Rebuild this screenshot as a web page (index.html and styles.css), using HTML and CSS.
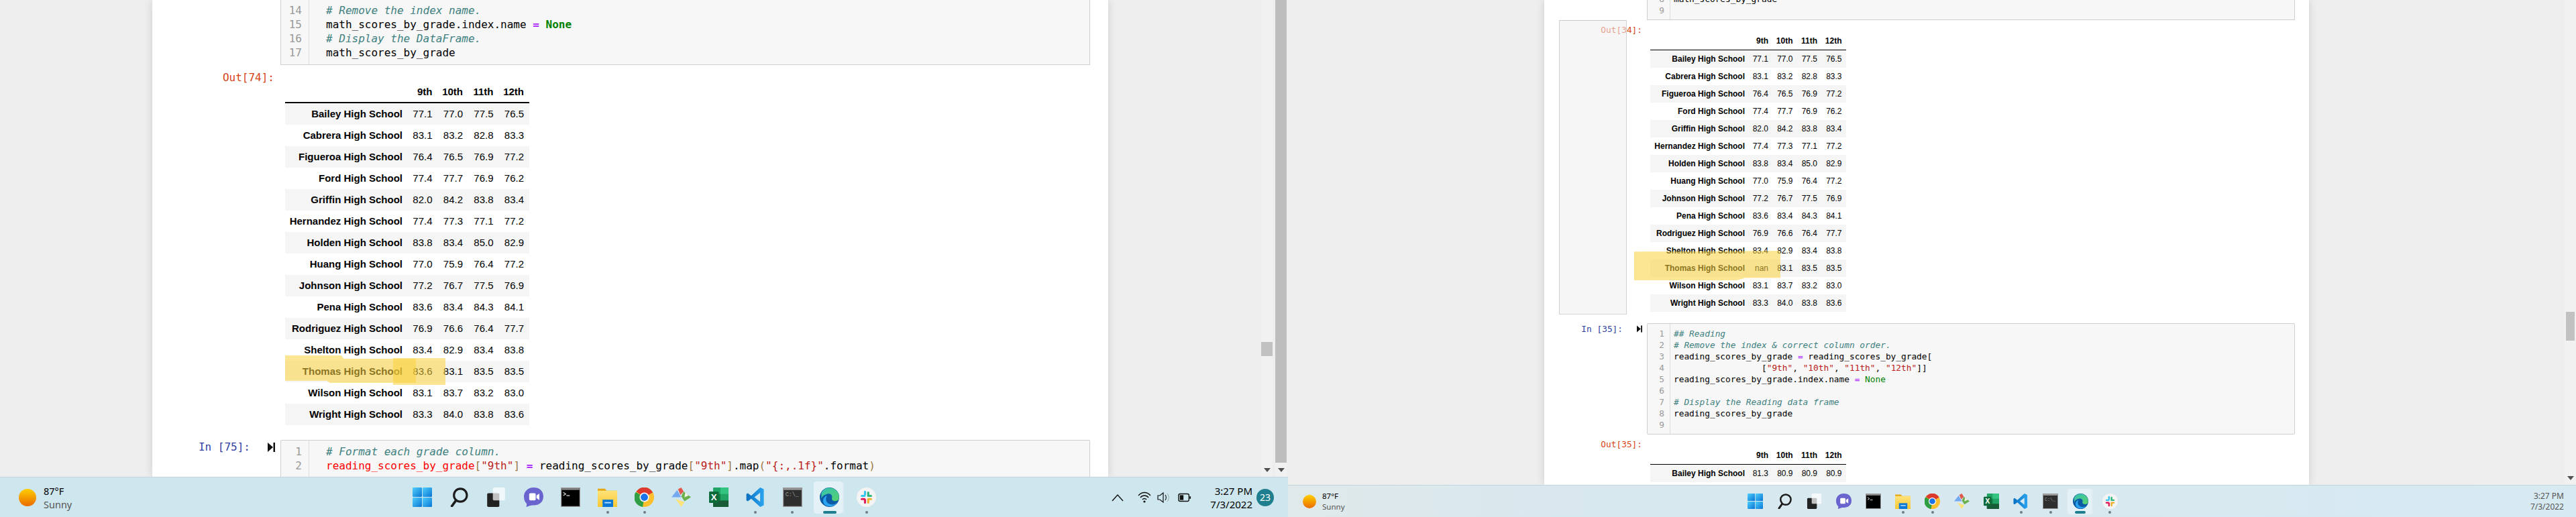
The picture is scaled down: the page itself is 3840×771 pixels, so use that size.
FILE: index.html
```html
<!DOCTYPE html>
<html lang="en">
<head>
    <meta charset="UTF-8">
    <title>Jupyter notebooks on two screens</title>
    <link rel="stylesheet" href="styles.css">
</head>
<body>
    <svg class="defs" width="0" height="0">
        <defs>
            <linearGradient id="g-win" x1="0" y1="0" x2="1" y2="1"><stop offset="0" stop-color="#4fd0fb"/><stop offset="1" stop-color="#0a74d6"/></linearGradient>
            <linearGradient id="g-folder" x1="0" y1="0" x2="0" y2="1"><stop offset="0" stop-color="#ffe27a"/><stop offset="1" stop-color="#fbc833"/></linearGradient>
            <linearGradient id="g-edge" x1="0" y1="0" x2="1" y2="1"><stop offset="0" stop-color="#35c1b4"/><stop offset="1" stop-color="#58d26a"/></linearGradient>
            <linearGradient id="g-vs" x1="0" y1="0" x2="1" y2="0"><stop offset="0" stop-color="#0a6fc0"/><stop offset="1" stop-color="#2aa4f0"/></linearGradient>

            <symbol id="i-win" viewBox="0 0 24 24">
                <rect x="0" y="0" width="11.6" height="11.6" rx="1" fill="url(#g-win)"/>
                <rect x="12.4" y="0" width="11.6" height="11.6" rx="1" fill="url(#g-win)"/>
                <rect x="0" y="12.4" width="11.6" height="11.6" rx="1" fill="url(#g-win)"/>
                <rect x="12.4" y="12.4" width="11.6" height="11.6" rx="1" fill="url(#g-win)"/>
            </symbol>
            <symbol id="i-search" viewBox="0 0 24 24">
                <circle cx="13.5" cy="9.5" r="8" fill="none" stroke="#1c1c1c" stroke-width="2.6"/>
                <path d="M8 16 L3 23" stroke="#1c1c1c" stroke-width="3" stroke-linecap="round"/>
            </symbol>
            <symbol id="i-tasks" viewBox="0 0 24 24">
                <rect x="1" y="7" width="15" height="17" rx="1.5" fill="#222"/>
                <rect x="8" y="0" width="15" height="16" rx="1.5" fill="#fff" fill-opacity=".72"/>
            </symbol>
            <symbol id="i-chat" viewBox="0 0 24 24">
                <path d="M12 0 C20 0 24 5 24 11 C24 18 19 22 12 22 C10 22 8 22 6 23 L3 24 L3.500 20 C1 18 0 15 0 11 C0 5 5 0 12 0 Z" fill="#6a64cf"/>
                <rect x="6.500" y="7" width="8" height="9" rx="1.500" fill="#fff"/>
                <path d="M15.500 10 L19 7.500 V15.500 L15.500 13 Z" fill="#fff"/>
            </symbol>
            <symbol id="i-term" viewBox="0 0 24 24">
                <rect x="0.500" y="0.500" width="23" height="23" fill="#000" stroke="#9a9a9a"/>
                <rect x="1" y="1" width="22" height="2" fill="#8c8c8c"/>
                <path d="M3 6 L6 8 L3 10 M7 10 H11" stroke="#ddd" stroke-width="1" fill="none"/>
            </symbol>
            <symbol id="i-folder" viewBox="0 0 24 24">
                <path d="M0 1.500 H9 L11 4 H24 V24 H0 Z" fill="#e6a817"/>
                <rect x="0" y="4" width="24" height="20" fill="url(#g-folder)"/>
                <rect x="6" y="15" width="13" height="9" fill="#0a78d4"/>
                <rect x="8.500" y="18" width="8" height="1.500" fill="#bfe3ff"/>
            </symbol>
            <symbol id="i-chrome" viewBox="0 0 24 24">
                <circle cx="12" cy="12" r="12" fill="#fbc02d"/>
                <path d="M12 12 L2 5 A12 12 0 0 1 22.500 6 Z" fill="#dc3a2c"/>
                <path d="M12 12 L1.500 5.500 A12 12 0 0 0 10 24 Z" fill="#2f9e44"/>
                <circle cx="12" cy="12" r="5.800" fill="#fff"/>
                <circle cx="12" cy="12" r="4.500" fill="#1a73e8"/>
            </symbol>
            <symbol id="i-git" viewBox="0 0 24 24">
                <path d="M12 12 L0 12 L7 3 L12 12 Z" fill="#74a9f2"/>
                <path d="M8 2 L12 0 L15 5 L11 9 Z" fill="#e2574c"/>
                <path d="M15 5 L24 12 L16 17 L12 11 Z" fill="#6cb04d"/>
                <path d="M17 6 L21 10 L16 12 Z" fill="#f0f5ea"/>
                <path d="M5 14 L16 18 L12 24 Z" fill="#fbe27a"/>
            </symbol>
            <symbol id="i-excel" viewBox="0 0 24 24">
                <rect x="5" y="0" width="19" height="24" rx="1" fill="#21a366"/>
                <rect x="14" y="0" width="10" height="8" fill="#33c481"/>
                <rect x="5" y="8" width="9" height="8" fill="#107c41"/>
                <rect x="5" y="16" width="19" height="8" fill="#185c37"/>
                <rect x="0" y="5" width="12" height="14" rx="1" fill="#0f6a3a"/>
                <text x="6" y="15.500" class="excel-x">X</text>
            </symbol>
            <symbol id="i-vs" viewBox="0 0 24 24">
                <path d="M17.500 0 L22 2 V22 L17.500 24 L6.500 13.800 L2.300 17 L0.500 16 V8 L2.300 7 L6.500 10.200 Z M17.500 6.500 L10.500 12 L17.500 17.500 Z" fill="url(#g-vs)" fill-rule="evenodd"/>
            </symbol>
            <symbol id="i-cmd" viewBox="0 0 24 24">
                <rect x="0.500" y="0.500" width="23" height="23" fill="#2e2e2e" stroke="#9a9a9a"/>
                <rect x="1" y="1" width="22" height="2" fill="#a0a0a0"/>
                <text x="3" y="11" class="cmd-text">C:\_</text>
            </symbol>
            <symbol id="i-edge" viewBox="0 0 24 24">
                <circle cx="12" cy="12" r="12" fill="#0c59a4"/>
                <path d="M2 7 C5 0 13 -1 18 2 C23 5 25 11 23 15 C20 18 14 17 15 13 C16 9 13 7 9 8 C6 9 3 10 2 14 Z" fill="url(#g-edge)"/>
                <path d="M9 10 C6 14 8 21 15 21 C18 21 20 20 22 18 C19 23 12 25 7 22 C3 19 3 12 9 10 Z" fill="#2aa4f0"/>
            </symbol>
            <symbol id="i-slack" viewBox="0 0 24 24">
                <circle cx="12" cy="12" r="12" fill="#f4f4f4"/>
                <rect x="5" y="9" width="6" height="2.600" rx="1.300" fill="#36c5f0"/>
                <rect x="9" y="4" width="2.600" height="6" rx="1.300" fill="#36c5f0"/>
                <rect x="13" y="5" width="2.600" height="6" rx="1.300" fill="#2eb67d"/>
                <rect x="13" y="9" width="6" height="2.600" rx="1.300" fill="#2eb67d"/>
                <rect x="13" y="13" width="6" height="2.600" rx="1.300" fill="#ecb22e"/>
                <rect x="13" y="14" width="2.600" height="6" rx="1.300" fill="#ecb22e"/>
                <rect x="5" y="13" width="6" height="2.600" rx="1.300" fill="#e01e5a"/>
                <rect x="9" y="14" width="2.600" height="6" rx="1.300" fill="#e01e5a"/>
            </symbol>
            <symbol id="i-run" viewBox="0 0 11 14">
                <path d="M0 0 L8 7 L0 14 Z" fill="#111"/>
                <rect x="8.500" y="0" width="2.500" height="14" fill="#111"/>
            </symbol>
        </defs>
    </svg>

    <div class="screens">
        <!-- left monitor -->
        <section class="screen big">
            <div class="browser">
                <main class="sheet">
                    <div class="cell-row">
                        <div class="prompt"></div>
                        <div class="cell top-cut">
                            <div class="gutter"><div>14</div><div>15</div><div>16</div><div>17</div></div>
                            <div class="code">
                                <div class="ln"><span class="c"># Remove the index name.</span></div>
                                <div class="ln">math_scores_by_grade.index.name <span class="o">=</span> <span class="k">None</span></div>
                                <div class="ln"><span class="c"># Display the DataFrame.</span></div>
                                <div class="ln">math_scores_by_grade</div>
                            </div>
                        </div>
                    </div>

                    <div class="output-row">
                        <div class="prompt out">Out[74]:</div>
                        <table class="df">
                            <thead><tr><th></th><th>9th</th><th>10th</th><th>11th</th><th>12th</th></tr></thead>
                            <tbody>
                                <tr><th>Bailey High School</th><td>77.1</td><td>77.0</td><td>77.5</td><td>76.5</td></tr>
                                <tr><th>Cabrera High School</th><td>83.1</td><td>83.2</td><td>82.8</td><td>83.3</td></tr>
                                <tr><th>Figueroa High School</th><td>76.4</td><td>76.5</td><td>76.9</td><td>77.2</td></tr>
                                <tr><th>Ford High School</th><td>77.4</td><td>77.7</td><td>76.9</td><td>76.2</td></tr>
                                <tr><th>Griffin High School</th><td>82.0</td><td>84.2</td><td>83.8</td><td>83.4</td></tr>
                                <tr><th>Hernandez High School</th><td>77.4</td><td>77.3</td><td>77.1</td><td>77.2</td></tr>
                                <tr><th>Holden High School</th><td>83.8</td><td>83.4</td><td>85.0</td><td>82.9</td></tr>
                                <tr><th>Huang High School</th><td>77.0</td><td>75.9</td><td>76.4</td><td>77.2</td></tr>
                                <tr><th>Johnson High School</th><td>77.2</td><td>76.7</td><td>77.5</td><td>76.9</td></tr>
                                <tr><th>Pena High School</th><td>83.6</td><td>83.4</td><td>84.3</td><td>84.1</td></tr>
                                <tr><th>Rodriguez High School</th><td>76.9</td><td>76.6</td><td>76.4</td><td>77.7</td></tr>
                                <tr><th>Shelton High School</th><td>83.4</td><td>82.9</td><td>83.4</td><td>83.8</td></tr>
                                <tr><th>Thomas High School</th><td>83.6</td><td>83.1</td><td>83.5</td><td>83.5</td></tr>
                                <tr><th>Wilson High School</th><td>83.1</td><td>83.7</td><td>83.2</td><td>83.0</td></tr>
                                <tr><th>Wright High School</th><td>83.3</td><td>84.0</td><td>83.8</td><td>83.6</td></tr>
                            </tbody>
                        </table>
                        <div class="marker mark-a"></div>
                        <div class="marker mark-b"></div>
                    </div>

                    <div class="cell-row next">
                        <div class="prompt in"><span>In [75]:</span><svg class="run"><use href="#i-run"/></svg></div>
                        <div class="cell bottom-cut">
                            <div class="gutter"><div>1</div><div>2</div></div>
                            <div class="code">
                                <div class="ln"><span class="c"># Format each grade column.</span></div>
                                <div class="ln"><span class="err">reading_scores_by_grade</span><span class="b">[</span><span class="s">"9th"</span><span class="b">]</span> <span class="o">=</span> reading_scores_by_grade<span class="b">[</span><span class="s">"9th"</span><span class="b">]</span>.map<span class="b">(</span><span class="s">"{:,.1f}"</span>.format<span class="b">)</span></div>
                            </div>
                        </div>
                    </div>
                </main>
                <div class="filler"></div>
                <div class="scroll track">
                    <div class="thumb"></div>
                    <div class="arrow"></div>
                </div>
                <div class="scroll solid">
                    <div class="bar"></div>
                    <div class="arrow"></div>
                </div>
            </div>

            <footer class="taskbar">
                <div class="weather">
                    <div class="sun"></div>
                    <div class="weather-text"><div>87°F</div><div class="dim">Sunny</div></div>
                </div>
                <div class="apps">
                    <div class="app"><svg class="ico"><use href="#i-win"/></svg></div>
                    <div class="app"><svg class="ico"><use href="#i-search"/></svg></div>
                    <div class="app"><svg class="ico"><use href="#i-tasks"/></svg></div>
                    <div class="app"><svg class="ico"><use href="#i-chat"/></svg></div>
                    <div class="app"><svg class="ico"><use href="#i-term"/></svg></div>
                    <div class="app open"><svg class="ico"><use href="#i-folder"/></svg></div>
                    <div class="app open"><svg class="ico"><use href="#i-chrome"/></svg></div>
                    <div class="app"><svg class="ico"><use href="#i-git"/></svg></div>
                    <div class="app"><svg class="ico"><use href="#i-excel"/></svg></div>
                    <div class="app open"><svg class="ico"><use href="#i-vs"/></svg></div>
                    <div class="app open"><svg class="ico"><use href="#i-cmd"/></svg></div>
                    <div class="app active"><svg class="ico"><use href="#i-edge"/></svg></div>
                    <div class="app open"><svg class="ico"><use href="#i-slack"/></svg></div>
                </div>
                <div class="tray">
                    <svg class="tray-ico chevron" viewBox="0 0 18 18"><path d="M1 14 L9 5 L17 14" fill="none" stroke="#111" stroke-width="1.400"/></svg>
                    <svg class="tray-ico wifi" viewBox="0 0 20 18"><path d="M1 6 C6 0 14 0 19 6 M4 9 C7 5 13 5 16 9 M7 12 C8.500 10 11.500 10 13 12" fill="none" stroke="#111" stroke-width="1.300"/><circle cx="10" cy="15" r="1.600" fill="#111"/></svg>
                    <svg class="tray-ico speaker" viewBox="0 0 20 18"><path d="M1 6 H4 L9 2 V16 L4 12 H1 Z" fill="none" stroke="#111" stroke-width="1.200"/><path d="M12 5 C14 8 14 10 12 13" fill="none" stroke="#111" stroke-width="1.100"/><path d="M15 3 C18 7 18 11 15 15" fill="none" stroke="#9aa" stroke-width="1"/></svg>
                    <svg class="tray-ico battery" viewBox="0 0 22 18"><rect x="1" y="3" width="17" height="12" rx="2.500" fill="none" stroke="#111" stroke-width="1.500"/><rect x="3" y="5" width="6" height="8" fill="#111"/><rect x="19" y="7" width="2" height="4" fill="#111"/></svg>
                    <div class="clock"><div>3:27 PM</div><div>7/3/2022</div></div>
                    <div class="badge">23</div>
                </div>
            </footer>
        </section>

        <!-- right monitor -->
        <section class="screen small">
            <div class="browser">
                <main class="sheet">
                    <div class="cell-row">
                        <div class="prompt"></div>
                        <div class="cell top-cut">
                            <div class="gutter"><div>8</div><div>9</div></div>
                            <div class="code">
                                <div class="ln">math_scores_by_grade</div>
                                <div class="ln"></div>
                            </div>
                        </div>
                    </div>

                    <div class="output-row">
                        <div class="prompt out">Out[34]:</div>
                        <table class="df">
                            <thead><tr><th></th><th>9th</th><th>10th</th><th>11th</th><th>12th</th></tr></thead>
                            <tbody>
                                <tr><th>Bailey High School</th><td>77.1</td><td>77.0</td><td>77.5</td><td>76.5</td></tr>
                                <tr><th>Cabrera High School</th><td>83.1</td><td>83.2</td><td>82.8</td><td>83.3</td></tr>
                                <tr><th>Figueroa High School</th><td>76.4</td><td>76.5</td><td>76.9</td><td>77.2</td></tr>
                                <tr><th>Ford High School</th><td>77.4</td><td>77.7</td><td>76.9</td><td>76.2</td></tr>
                                <tr><th>Griffin High School</th><td>82.0</td><td>84.2</td><td>83.8</td><td>83.4</td></tr>
                                <tr><th>Hernandez High School</th><td>77.4</td><td>77.3</td><td>77.1</td><td>77.2</td></tr>
                                <tr><th>Holden High School</th><td>83.8</td><td>83.4</td><td>85.0</td><td>82.9</td></tr>
                                <tr><th>Huang High School</th><td>77.0</td><td>75.9</td><td>76.4</td><td>77.2</td></tr>
                                <tr><th>Johnson High School</th><td>77.2</td><td>76.7</td><td>77.5</td><td>76.9</td></tr>
                                <tr><th>Pena High School</th><td>83.6</td><td>83.4</td><td>84.3</td><td>84.1</td></tr>
                                <tr><th>Rodriguez High School</th><td>76.9</td><td>76.6</td><td>76.4</td><td>77.7</td></tr>
                                <tr><th>Shelton High School</th><td>83.4</td><td>82.9</td><td>83.4</td><td>83.8</td></tr>
                                <tr><th>Thomas High School</th><td>nan</td><td>83.1</td><td>83.5</td><td>83.5</td></tr>
                                <tr><th>Wilson High School</th><td>83.1</td><td>83.7</td><td>83.2</td><td>83.0</td></tr>
                                <tr><th>Wright High School</th><td>83.3</td><td>84.0</td><td>83.8</td><td>83.6</td></tr>
                            </tbody>
                        </table>
                        <div class="collapser"></div>
                        <div class="marker mark-c"></div>
                    </div>

                    <div class="cell-row next">
                        <div class="prompt in"><span>In [35]:</span><svg class="run"><use href="#i-run"/></svg></div>
                        <div class="cell">
                            <div class="gutter"><div>1</div><div>2</div><div>3</div><div>4</div><div>5</div><div>6</div><div>7</div><div>8</div><div>9</div></div>
                            <div class="code">
                                <div class="ln"><span class="c">## Reading</span></div>
                                <div class="ln"><span class="c"># Remove the index &amp; correct column order.</span></div>
                                <div class="ln">reading_scores_by_grade <span class="o">=</span> reading_scores_by_grade[</div>
                                <div class="ln">                 [<span class="s">"9th"</span>, <span class="s">"10th"</span>, <span class="s">"11th"</span>, <span class="s">"12th"</span>]]</div>
                                <div class="ln">reading_scores_by_grade.index.name <span class="o">=</span> <span class="k">None</span></div>
                                <div class="ln"></div>
                                <div class="ln"><span class="c"># Display the Reading data frame</span></div>
                                <div class="ln">reading_scores_by_grade</div>
                                <div class="ln"></div>
                            </div>
                        </div>
                    </div>

                    <div class="output-row last">
                        <div class="prompt out">Out[35]:</div>
                        <table class="df">
                            <thead><tr><th></th><th>9th</th><th>10th</th><th>11th</th><th>12th</th></tr></thead>
                            <tbody>
                                <tr><th>Bailey High School</th><td>81.3</td><td>80.9</td><td>80.9</td><td>80.9</td></tr>
                            </tbody>
                        </table>
                    </div>
                </main>
                <div class="filler"></div>
                <div class="scroll track">
                    <div class="thumb"></div>
                    <div class="arrow"></div>
                </div>
            </div>

            <footer class="taskbar">
                <div class="weather">
                    <div class="sun"></div>
                    <div class="weather-text"><div>87°F</div><div class="dim">Sunny</div></div>
                </div>
                <div class="apps">
                    <div class="app"><svg class="ico"><use href="#i-win"/></svg></div>
                    <div class="app"><svg class="ico"><use href="#i-search"/></svg></div>
                    <div class="app"><svg class="ico"><use href="#i-tasks"/></svg></div>
                    <div class="app"><svg class="ico"><use href="#i-chat"/></svg></div>
                    <div class="app"><svg class="ico"><use href="#i-term"/></svg></div>
                    <div class="app open"><svg class="ico"><use href="#i-folder"/></svg></div>
                    <div class="app open"><svg class="ico"><use href="#i-chrome"/></svg></div>
                    <div class="app"><svg class="ico"><use href="#i-git"/></svg></div>
                    <div class="app"><svg class="ico"><use href="#i-excel"/></svg></div>
                    <div class="app open"><svg class="ico"><use href="#i-vs"/></svg></div>
                    <div class="app open"><svg class="ico"><use href="#i-cmd"/></svg></div>
                    <div class="app active"><svg class="ico"><use href="#i-edge"/></svg></div>
                    <div class="app open"><svg class="ico"><use href="#i-slack"/></svg></div>
                </div>
                <div class="tray">
                    <div class="clock"><div>3:27 PM</div><div>7/3/2022</div></div>
                </div>
            </footer>
        </section>
    </div>
</body>
</html>
```

FILE: styles.css
```css
* {
    box-sizing: border-box;
}
html, body {
    margin: 0;
    padding: 0;
    overflow: hidden;
}
.defs {
    position: absolute;
}
.screens {
    display: flex;
    width: 3840px;
    height: 771px;
}
.screen {
    display: flex;
    flex-direction: column;
    width: 1920px;
    height: 771px;
    font-family: "Noto Sans", sans-serif;
    color: #000;
}

/* page area */
.browser {
    display: flex;
    flex: 1;
    min-height: 0;
    overflow: hidden;
    background-color: #eeeeee;
}
.sheet {
    position: relative;
    flex: none;
    background-color: #fff;
    box-shadow: 0 0 12px rgba(0, 0, 0, 0.14);
    font-family: "DejaVu Sans Mono", monospace;
}
.filler {
    flex: 1;
}
.big .sheet {
    width: 1425px;
    margin-left: 227px;
    font-size: 16px;
    line-height: 21px;
}
.small .sheet {
    width: 1140px;
    margin-left: 382px;
    font-size: 12.8px;
    line-height: 17px;
}

/* cells */
.cell-row, .output-row {
    display: flex;
}
.output-row {
    position: relative;
}
.prompt {
    flex: none;
    display: flex;
    justify-content: flex-end;
    align-items: flex-start;
    white-space: pre;
}
.big .prompt {
    width: 191px;
    padding-right: 9px;
}
.small .prompt {
    width: 153px;
    padding-right: 7px;
}
.out {
    color: #d84315;
}
.in {
    color: #303f9f;
}
.run {
    flex: none;
}
.big .in {
    padding-right: 8px;
    gap: 26px;
}
.big .run {
    width: 11px;
    height: 14px;
    margin-top: 4px;
}
.small .in {
    gap: 21px;
}
.small .run {
    width: 8px;
    height: 11px;
    margin-top: 3px;
}
.cell {
    display: flex;
    flex: none;
    border: 1px solid #cfcfcf;
    border-radius: 2px;
    background-color: #f7f7f7;
}
.top-cut {
    border-top: none;
    border-radius: 0;
}
.bottom-cut {
    border-bottom: none;
}
.gutter {
    flex: none;
    text-align: right;
    color: #999;
    border-right: 1px solid #ddd;
}
.code {
    color: #000;
}
.ln {
    height: 1lh;
    white-space: pre;
}
.big .cell {
    width: 1207px;
}
.big .cell .gutter {
    width: 42px;
    padding: 6px 10px 5px 0;
}
.big .cell .code {
    padding: 6px 0 5px 25px;
}
.big .next {
    margin-top: 22px;
}
.big .bottom-cut .code {
    padding-bottom: 20px;
}
.big .top-cut .gutter {
    padding: 5px 10px 7px 0;
}
.big .top-cut .code {
    padding: 5px 0 7px 25px;
}
.small .cell {
    width: 966px;
}
.small .cell .gutter {
    width: 34px;
    padding: 6px 8px 5px 0;
}
.small .cell .code {
    padding: 6px 0 5px 5px;
}
.small .top-cut {
    margin-top: -10px;
}
.small .top-cut .gutter {
    padding: 0 8px 5px 0;
}
.small .top-cut .code {
    padding: 0 0 5px 5px;
}
.small .next {
    margin-top: 13px;
}

/* code colours */
.c {
    color: #408080;
    font-style: italic;
}
.o {
    color: #aa22ff;
    font-weight: bold;
}
.k {
    color: #008000;
    font-weight: bold;
}
.s {
    color: #ba2121;
}
.err {
    color: #ff0000;
}
.b {
    color: #997744;
}
.small .k, .small .o {
    font-weight: normal;
}

/* dataframes */
.df {
    flex: none;
    table-layout: fixed;
    border-collapse: separate;
    border-spacing: 0;
    font-family: "Liberation Sans", Arial, sans-serif;
    color: #000;
    text-align: right;
}
.df th {
    font-weight: bold;
}
.df th, .df td {
    padding-top: 0;
    padding-bottom: 0;
    white-space: nowrap;
}
.df tbody tr:nth-child(odd) {
    background-color: #f5f5f5;
}
.big .output-row {
    padding-top: 8px;
}
.big .df {
    width: 364px;
    margin: 16px 0 0 7px;
    font-size: 15px;
    line-height: 32px;
}
.big .df th, .big .df td {
    width: 45.5px;
    height: 32px;
    padding-left: 0;
    padding-right: 8px;
}
.big .df th:first-child {
    width: 182px;
    padding-right: 7px;
}
.big .df thead th {
    height: 33px;
    line-height: 31px;
    border-bottom: 2px solid #000;
}
.small .output-row {
    padding: 6px 0 4px;
}
.small .df {
    width: 292px;
    margin: 13px 0 0 5px;
    font-size: 12px;
    line-height: 26px;
}
.small .df th, .small .df td {
    width: 36.5px;
    height: 26px;
    padding-left: 0;
    padding-right: 6.5px;
}
.small .df th:first-child {
    width: 146px;
    padding-right: 5px;
}
.small .df thead th {
    line-height: 25px;
    border-bottom: 1px solid #000;
}

/* highlighter strokes and the hovered output box sit on top of the output */
.marker {
    position: absolute;
    background-color: rgba(250, 210, 60, 0.55);
}
.mark-a {
    left: 198px;
    top: 433px;
    width: 195px;
    height: 41px;
    clip-path: polygon(0 0, 43% 0, 45% 12%, 100% 12%, 100% 100%, 34% 100%, 32% 92%, 0 92%);
}
.mark-b {
    left: 359px;
    top: 437px;
    width: 78px;
    height: 40px;
}
.mark-c {
    left: 134px;
    top: 344px;
    width: 218px;
    height: 44px;
    clip-path: polygon(0 3%, 100% 0, 100% 92%, 76% 92%, 70% 100%, 0 100%);
}
.collapser {
    position: absolute;
    left: 22px;
    top: 0;
    width: 101px;
    height: 439px;
    background-color: rgba(238, 238, 238, 0.55);
    border: 1px solid #d2d2d2;
    border-top-color: #c8c8c8;
}

/* scrollbars */
.scroll {
    flex: none;
    display: flex;
    flex-direction: column;
    align-items: center;
    width: 17px;
}
.track {
    background-color: #f1f1f1;
}
.thumb {
    width: 17px;
    background-color: #c1c1c1;
}
.big .track .thumb {
    height: 21px;
    margin-top: 510px;
}
.big .solid {
    margin: 0 2px 0 4px;
    background-color: #f1f1f1;
}
.bar {
    width: 17px;
    height: 690px;
    background-color: #bdbdbd;
}
.arrow {
    width: 0;
    height: 0;
    margin: auto 0 7px;
    border-left: 5px solid transparent;
    border-right: 5px solid transparent;
    border-top: 6px solid #505050;
}
.small .thumb {
    width: 13px;
    height: 43px;
    margin-top: 465px;
}

/* taskbars */
.taskbar {
    display: flex;
    align-items: center;
    flex: none;
    border-top: 1px solid #c4d6dc;
}
.big .taskbar {
    height: 60px;
    background-color: #cee6ed;
}
.small .taskbar {
    height: 48px;
    background: linear-gradient(90deg, #dfe9ea 0%, #d9e8ef 20%, #d7e9f1 100%);
}
.weather {
    flex: none;
    display: flex;
    align-items: center;
}
.big .weather {
    width: 602px;
    padding-left: 28px;
    gap: 11px;
    font-size: 14.500px;
    line-height: 20px;
}
.small .weather {
    width: 674px;
    padding-left: 22px;
    gap: 9px;
    font-size: 11.500px;
    line-height: 16px;
}
.sun {
    flex: none;
    border-radius: 50%;
    background: linear-gradient(180deg, #ffcf00, #ea6a00);
}
.big .sun {
    width: 26px;
    height: 26px;
}
.small .sun {
    width: 20px;
    height: 20px;
}
.dim {
    color: #555;
}
.apps {
    flex: none;
    display: flex;
    height: 100%;
}
.app {
    position: relative;
    display: flex;
    align-items: center;
    justify-content: center;
    flex: none;
}
.big .app {
    width: 55.200px;
}
.small .app {
    width: 44.100px;
}
.big .ico {
    width: 29px;
    height: 29px;
}
.small .ico {
    width: 23px;
    height: 23px;
}
.open::after {
    content: "";
    position: absolute;
    left: 50%;
    bottom: 5px;
    width: 4px;
    height: 4px;
    margin-left: -2px;
    border-radius: 50%;
    background-color: #6f7c82;
}
.active::before {
    content: "";
    position: absolute;
    left: 50%;
    z-index: 0;
    border-radius: 4px;
    background-color: #e4f1f6;
    box-shadow: 3px 0 0 -1px #dcecf2;
}
.big .active::before {
    top: 6px;
    width: 43px;
    height: 48px;
    margin-left: -24px;
}
.small .active::before {
    top: 5px;
    width: 36px;
    height: 38px;
    margin-left: -19px;
}
.active .ico {
    position: relative;
}
.active::after {
    content: "";
    position: absolute;
    left: 50%;
    bottom: 5px;
    width: 20px;
    height: 4px;
    margin-left: -10px;
    border-radius: 2px;
    background-color: #1f7f8e;
}
.small .active::after {
    width: 16px;
    margin-left: -8px;
}
.tray {
    flex: 1;
    display: flex;
    align-items: center;
    justify-content: flex-end;
}
.tray-ico {
    flex: none;
    width: 20px;
    height: 18px;
}
.big .tray {
    padding-right: 21px;
}
.chevron {
    margin-right: 20px;
}
.wifi {
    margin-right: 9px;
}
.speaker {
    margin-right: 11px;
}
.clock {
    text-align: right;
}
.big .clock {
    margin: 0 6px 0 28px;
    font-size: 15px;
    line-height: 20px;
}
.small .tray {
    padding-right: 18px;
}
.small .clock {
    font-size: 12px;
    line-height: 16px;
    color: #555;
}
.badge {
    flex: none;
    width: 26px;
    height: 26px;
    border-radius: 50%;
    background-color: #1f7f8e;
    color: #fff;
    font-size: 14px;
    line-height: 26px;
    text-align: center;
}
.excel-x {
    font-family: "Liberation Sans", sans-serif;
    font-size: 11px;
    font-weight: bold;
    fill: #fff;
    text-anchor: middle;
}
.cmd-text {
    font-family: "Liberation Mono", monospace;
    font-size: 7px;
    fill: #999;
}
```
